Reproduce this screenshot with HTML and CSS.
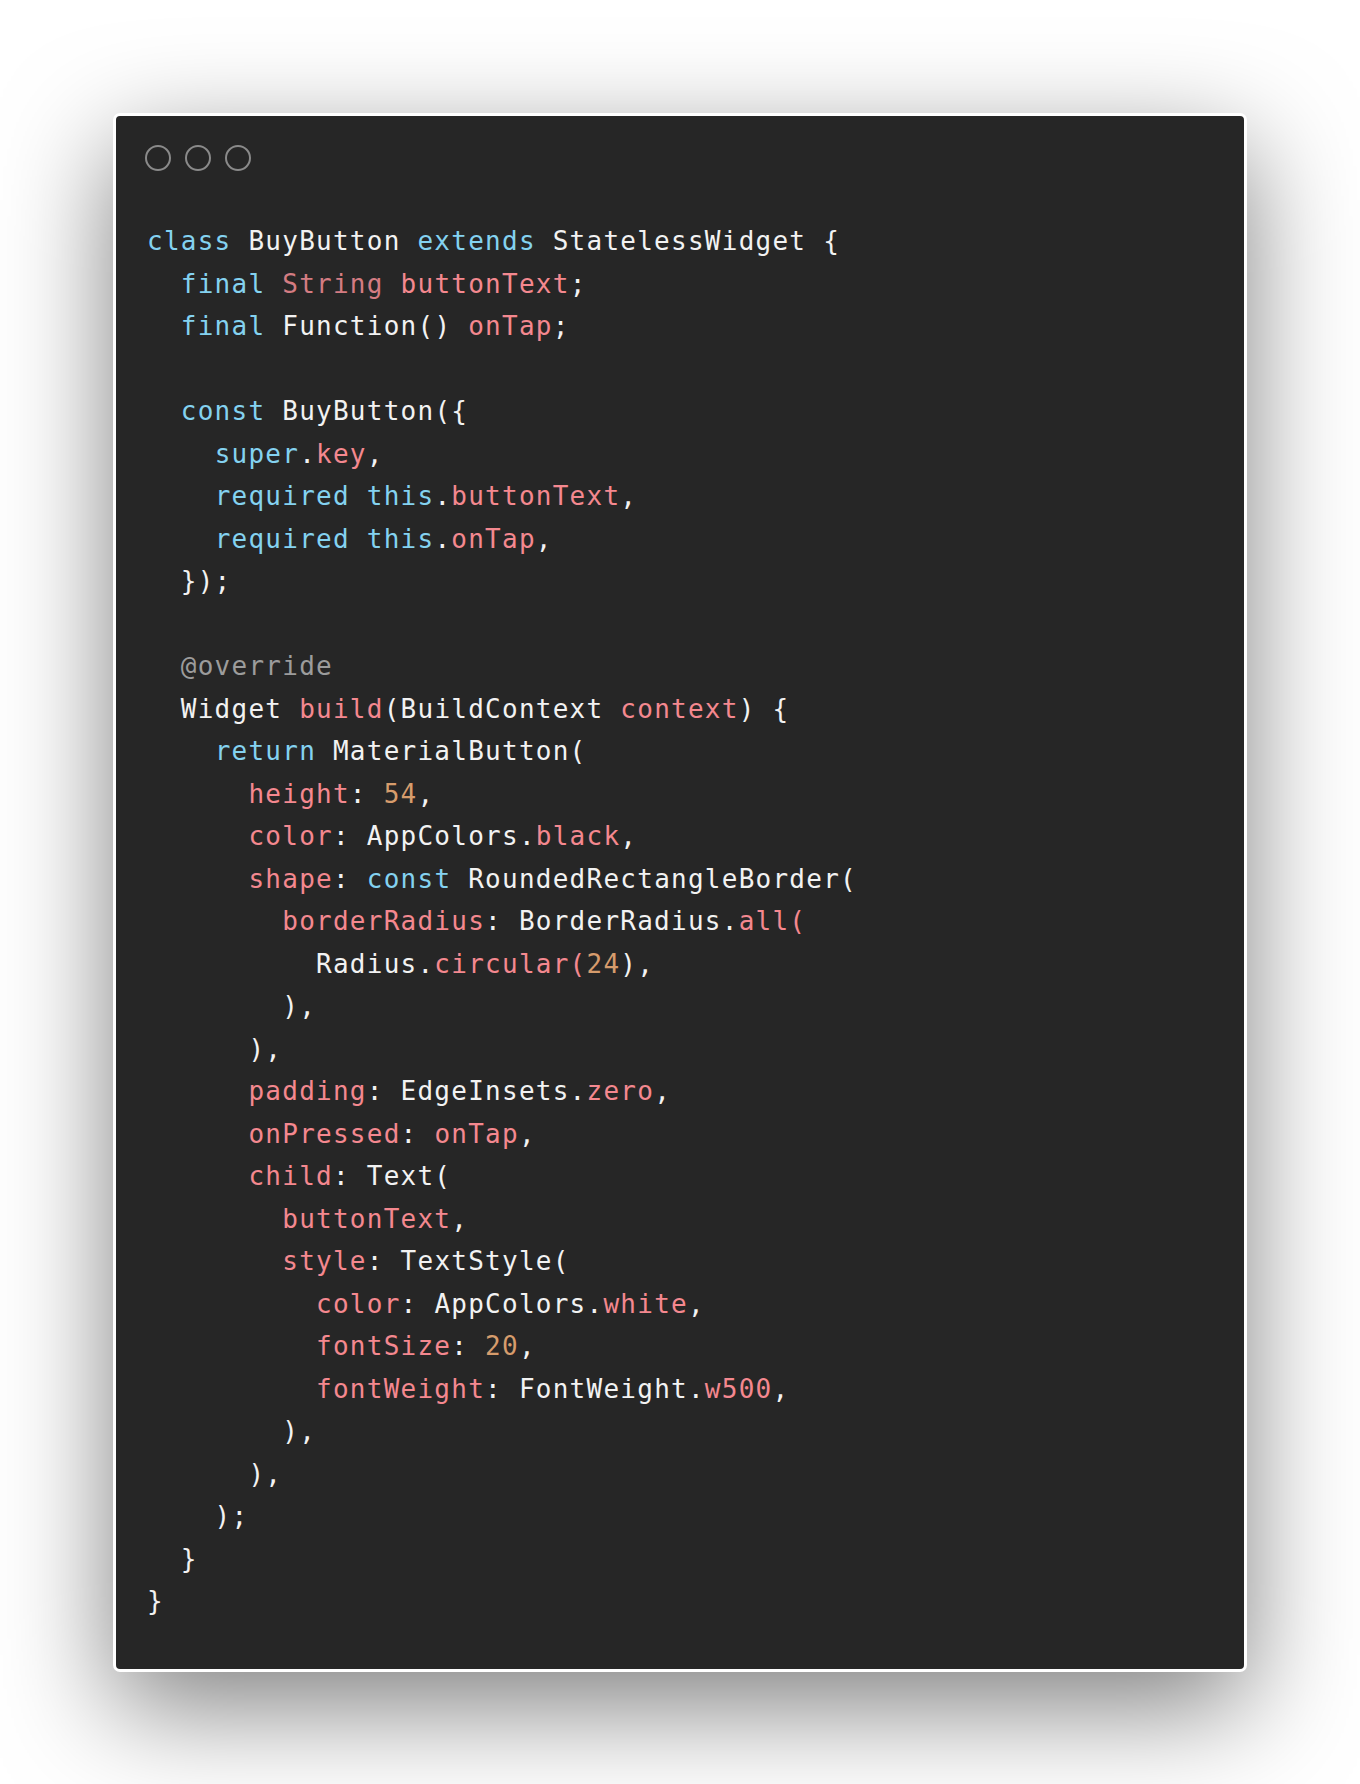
FILE: index.html
```html
<!DOCTYPE html>
<html lang="en">
<head>
<meta charset="utf-8">
<title>BuyButton</title>
<link rel="stylesheet" href="styles.css">
</head>
<body>
<div class="window">
  <div class="dots"><span class="dot"></span><span class="dot"></span><span class="dot"></span></div>
<pre class="code"><span class="kw">class</span> BuyButton <span class="kw">extends</span> StatelessWidget {
  <span class="kw">final</span> <span class="ty">String</span> <span class="id">buttonText</span>;
  <span class="kw">final</span> Function() <span class="id">onTap</span>;

  <span class="kw">const</span> BuyButton({
    <span class="kw">super</span>.<span class="id">key</span>,
    <span class="kw">required</span> <span class="kw">this</span>.<span class="id">buttonText</span>,
    <span class="kw">required</span> <span class="kw">this</span>.<span class="id">onTap</span>,
  });

  <span class="cm">@override</span>
  Widget <span class="id">build</span>(BuildContext <span class="id">context</span>) {
    <span class="kw">return</span> MaterialButton(
      <span class="id">height</span>: <span class="num">54</span>,
      <span class="id">color</span>: AppColors.<span class="id">black</span>,
      <span class="id">shape</span>: <span class="kw">const</span> RoundedRectangleBorder(
        <span class="id">borderRadius</span>: BorderRadius.<span class="id">all(</span>
          Radius.<span class="id">circular(</span><span class="num">24</span>),
        ),
      ),
      <span class="id">padding</span>: EdgeInsets.<span class="id">zero</span>,
      <span class="id">onPressed</span>: <span class="id">onTap</span>,
      <span class="id">child</span>: Text(
        <span class="id">buttonText</span>,
        <span class="id">style</span>: TextStyle(
          <span class="id">color</span>: AppColors.<span class="id">white</span>,
          <span class="id">fontSize</span>: <span class="num">20</span>,
          <span class="id">fontWeight</span>: FontWeight.<span class="id">w500</span>,
        ),
      ),
    );
  }
}</pre>
</div>
</body>
</html>
```
FILE: styles.css
```css
html, body {
  margin: 0;
  padding: 0;
  background: #ffffff;
}

body {
  padding-top: 113px;
  height: 1784px;
  box-sizing: border-box;
  overflow: hidden;
}

.window {
  box-sizing: border-box;
  width: 1134px;
  height: 1559px;
  margin: 0 auto;
  border: 3px solid #ffffff;
  border-radius: 7px;
  background: #262626;
  padding: 29px 29px 0 29px;
  box-shadow: 0 35px 110px rgba(0, 0, 0, 0.5);
}

.dots {
  display: flex;
  gap: 14px;
  height: 26px;
}

.dot {
  box-sizing: border-box;
  width: 26px;
  height: 26px;
  border: 2px solid #8a8a8a;
  border-radius: 50%;
}

.code {
  margin: 49px 0 0 2px;
  font-family: "DejaVu Sans Mono", "Liberation Mono", monospace;
  font-size: 26px;
  letter-spacing: 1.25px;
  line-height: 42.5px;
  color: #f2f2f2;
  white-space: pre;
}

.kw { color: #84d2f0; }
.id { color: #f4888f; }
.ty { color: #d47c82; }
.num { color: #d69c6c; }
.cm { color: #9c9c9c; }
```
